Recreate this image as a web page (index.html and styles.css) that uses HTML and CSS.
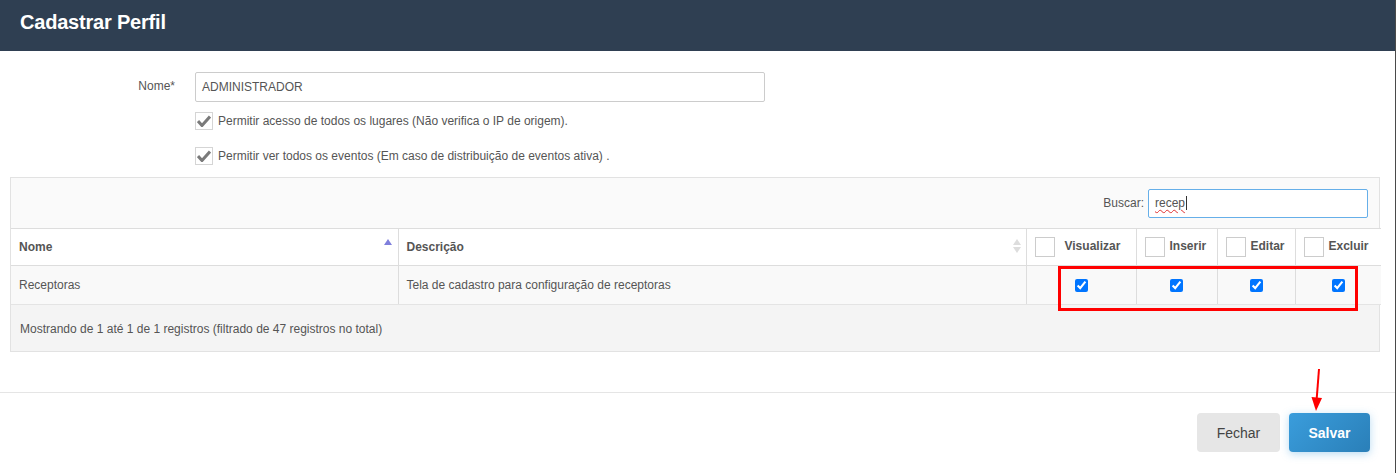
FILE: index.html
```html
<!DOCTYPE html>
<html lang="pt">
<head>
  <meta charset="UTF-8" />
  <title>Cadastrar Perfil</title>
  <link rel="stylesheet" href="styles.css">
</head>
<body>

<div class="modal">
  <div class="modal-header">
    <h2>Cadastrar Perfil</h2>
  </div>

  <div class="modal-body">
    <div class="form-row">
      <label class="form-label">Nome*</label>
      <div class="text-input">ADMINISTRADOR</div>
    </div>

    <div class="check-row">
      <span class="fake-check"><svg width="14" height="12" viewBox="0 0 14 12"><path d="M1 6 L5 10.5 L13 1.5" fill="none" stroke="#7a7a7a" stroke-width="3"/></svg></span>
      <span>Permitir acesso de todos os lugares (Não verifica o IP de origem).</span>
    </div>
    <div class="check-row second">
      <span class="fake-check"><svg width="14" height="12" viewBox="0 0 14 12"><path d="M1 6 L5 10.5 L13 1.5" fill="none" stroke="#7a7a7a" stroke-width="3"/></svg></span>
      <span>Permitir ver todos os eventos (Em caso de distribuição de eventos ativa) .</span>
    </div>

    <div class="grid-panel">
      <div class="grid-toolbar">
        <span class="search-label">Buscar:</span>
        <div class="search-box"><span class="typed">recep</span></div>
      </div>

      <table class="grid">
        <thead>
          <tr>
            <th class="col-nome">Nome <span class="sort-up"></span></th>
            <th class="col-desc">Descrição
              <span class="sort-both">
                <span class="tri-up"></span>
                <span class="tri-down"></span>
              </span>
            </th>
            <th class="col-vis"><span class="head-box"></span>Visualizar</th>
            <th class="col-ins"><span class="head-box"></span>Inserir</th>
            <th class="col-edt"><span class="head-box"></span>Editar</th>
            <th class="col-exc"><span class="head-box"></span>Excluir</th>
          </tr>
        </thead>
        <tbody>
          <tr>
            <td>Receptoras</td>
            <td>Tela de cadastro para configuração de receptoras</td>
            <td class="center"><input type="checkbox" checked></td>
            <td class="center"><input type="checkbox" checked></td>
            <td class="center"><input type="checkbox" checked></td>
            <td class="center"><input type="checkbox" checked></td>
          </tr>
        </tbody>
      </table>

      <div class="grid-footer">Mostrando de 1 até 1 de 1 registros (filtrado de 47 registros no total)</div>

      <div class="highlight"></div>
    </div>
  </div>

  <div class="modal-footer">
    <button class="btn btn-close">Fechar</button>
    <button class="btn btn-save">Salvar</button>
  </div>

  <!-- annotation arrow -->
  <svg class="arrow" width="20" height="46" viewBox="0 0 20 46">
    <line x1="11" y1="1" x2="8.6" y2="32" stroke="#f00" stroke-width="2"/>
    <polygon points="3.5,29 14,30 8,43" fill="#f00"/>
  </svg>
</div>

</body>
</html>
```

FILE: styles.css
```css
* { box-sizing: border-box; }

html, body {
  margin: 0;
  background: #fff;
}

body {
  font-family: 'Liberation Sans', Arial, sans-serif;
  font-size: 12px;
  color: #555;
}

.modal {
  position: relative;
  width: 1396px;
  height: 473px;
  border-right: 1px solid #4a4a4a;
}

.modal-header {
  height: 51px;
  background: #2f3f52;
  padding: 11px 20px 0;
}

.modal-header h2 {
  margin: 0;
  color: #fff;
  font-size: 20px;
  line-height: 23px;
  font-weight: bold;
  letter-spacing: -0.2px;
}

.modal-body {
  padding-top: 21px;
}

.form-row {
  display: flex;
  align-items: center;
  gap: 20px;
}

.form-label {
  width: 175px;
  text-align: right;
  padding-bottom: 2px;
}

.text-input {
  width: 570px;
  height: 30px;
  border: 1px solid #ccc;
  border-radius: 2px;
  padding: 0 6px;
  line-height: 28px;
  color: #555;
}

.check-row {
  display: flex;
  align-items: center;
  gap: 5px;
  margin: 10px 0 0 195px;
  height: 18px;
}

.check-row.second {
  margin-top: 17px;
}

.fake-check {
  width: 18px;
  height: 18px;
  border: 1px solid #d5d5d5;
  display: flex;
  align-items: center;
  justify-content: center;
  background: #fff;
}

.grid-panel {
  position: relative;
  margin: 12px 0 0 10px;
  width: 1370px;
  border: 1px solid #e2e2e2;
}

.grid-toolbar {
  height: 50px;
  background: #fafafa;
  display: flex;
  align-items: center;
  justify-content: flex-end;
  padding-right: 11px;
  gap: 4px;
}

.search-box {
  width: 220px;
  height: 29px;
  border: 1px solid #66afe9;
  border-radius: 2px;
  padding: 0 6px;
  line-height: 27px;
  color: #555;
  background: #fff;
}

.typed {
  text-decoration: underline wavy #e03030;
  text-decoration-thickness: 1px;
  text-underline-offset: 2px;
  border-right: 1px solid #333;
  padding-right: 1px;
}

.grid {
  width: 100%;
  border-collapse: collapse;
  table-layout: fixed;
}

.grid th, .grid td {
  border-top: 1px solid #ddd;
  border-left: 1px solid #ddd;
  text-align: left;
  white-space: nowrap;
  padding: 0 8px;
}

.grid th:first-child, .grid td:first-child {
  border-left: none;
}

.grid th {
  height: 37px;
  background: #fff;
  font-weight: bold;
  color: #555;
  position: relative;
}

.grid td {
  height: 39px;
  background: #f9f9f9;
  border-bottom: 1px solid #e4e4e4;
}

.col-nome { width: 387px; }
.col-desc { width: 628px; }
.col-vis { width: 110px; }
.col-ins { width: 81px; }
.col-edt { width: 78px; }
.col-exc { width: 86px; }

.head-box {
  display: inline-block;
  width: 20px;
  height: 20px;
  border: 1px solid #ccc;
  background: #fff;
  vertical-align: middle;
  margin-right: 10px;
}

.col-ins .head-box,
.col-edt .head-box,
.col-exc .head-box {
  margin-right: 5px;
}

.sort-up {
  position: absolute;
  right: 6px;
  top: 10px;
  border-left: 4px solid transparent;
  border-right: 4px solid transparent;
  border-bottom: 6px solid #7f7fdc;
}

.sort-both {
  position: absolute;
  right: 5px;
  top: 10px;
  display: flex;
  flex-direction: column;
  gap: 2px;
}

.tri-up {
  border-left: 4px solid transparent;
  border-right: 4px solid transparent;
  border-bottom: 6px solid #ddd;
}

.tri-down {
  border-left: 4px solid transparent;
  border-right: 4px solid transparent;
  border-top: 6px solid #ddd;
}

.center {
  text-align: center !important;
}

.grid input[type="checkbox"] {
  width: 13px;
  height: 13px;
  margin: 4px 0 0;
  accent-color: #0075ff;
}

.grid-footer {
  height: 46px;
  background: #f4f4f4;
  padding-left: 9px;
  line-height: 48px;
}

.highlight {
  position: absolute;
  left: 1047px;
  top: 88px;
  width: 300px;
  height: 45px;
  border: 3px solid #f00;
}

.modal-footer {
  margin-top: 40px;
  border-top: 1px solid #e5e5e5;
  padding: 20px 25px 0 0;
  display: flex;
  justify-content: flex-end;
  gap: 9px;
}

.btn {
  height: 39px;
  border: none;
  border-radius: 4px;
  font-family: 'Liberation Sans', Arial, sans-serif;
  font-size: 14px;
}

.btn-close {
  width: 83px;
  background: #e6e6e6;
  color: #444;
}

.btn-save {
  width: 81px;
  background: linear-gradient(135deg, #3a9ddc, #2a7fb8);
  color: #fff;
  font-weight: bold;
  box-shadow: 0 2px 8px rgba(52,152,219,0.35);
}

.arrow {
  position: absolute;
  left: 1308px;
  top: 368px;
}
```
